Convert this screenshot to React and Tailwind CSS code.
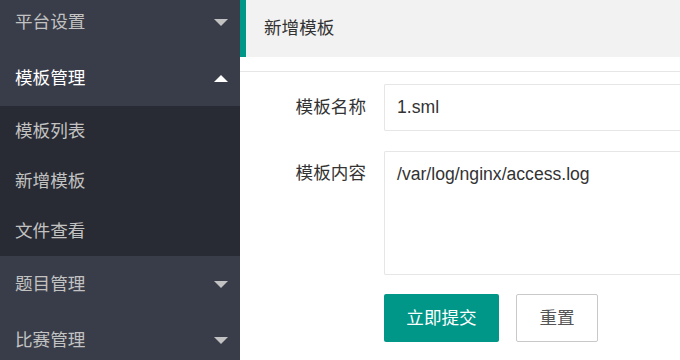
import React from 'react';

const font = { fontFamily: '"Liberation Sans", "Noto Sans CJK SC", sans-serif' };

const Caret = ({ up, light }) => (
    <span
        className={`w-0 h-0 border-l-[7px] border-r-[7px] border-l-transparent border-r-transparent ${
            up ? 'border-b-[7px] border-b-white' : 'border-t-[7px] border-t-[#c2c2c2]'
        } ${light ? '' : ''}`}
    ></span>
);

const NavItem = ({ label, open, active }) => (
    <div className="h-[56px] flex items-center justify-between pl-[15px] pr-[12px]">
        <span className={`text-[17.6px] ${active ? 'text-white' : 'text-[#c2c2c2]'}`}>{label}</span>
        <Caret up={open} />
    </div>
);

const SubItem = ({ label }) => (
    <div className="h-[50px] flex items-center pl-[15px] text-[17.6px] text-[#c2c2c2]">{label}</div>
);

const App = () => {
    return (
        <div className="w-[680px] h-[360px] flex overflow-hidden bg-white" style={font}>
            {/* Sidebar */}
            <div className="w-[240px] h-full bg-[#393D49] overflow-hidden shrink-0">
                <div className="-mt-[6px]">
                    <NavItem label="平台设置" />
                    <NavItem label="模板管理" open active />
                    <div className="bg-[#282b33]">
                        <SubItem label="模板列表" />
                        <SubItem label="新增模板" />
                        <SubItem label="文件查看" />
                    </div>
                    <NavItem label="题目管理" />
                    <NavItem label="比赛管理" />
                </div>
            </div>

            {/* Content */}
            <div className="flex-1 flex flex-col">
                <div className="h-[57px] border-l-[6px] border-[#009688] bg-[#f2f2f2] flex items-center pl-[18px] text-[17.6px] text-[#333]">
                    新增模板
                </div>
                <div className="mt-[14px] border-t border-[#e6e6e6] pt-[12px] flex flex-col gap-[20px]">
                    <div className="flex items-center">
                        <label className="w-[126px] text-right text-[17.6px] text-[#333]">模板名称</label>
                        <div className="ml-[18px] flex-1 h-[47px] border border-[#e6e6e6] rounded-l-[2px] border-r-0 flex items-center pl-[12px] text-[17.6px] text-[#333]">
                            1.sml
                        </div>
                    </div>
                    <div className="flex items-start">
                        <label className="w-[126px] text-right text-[17.6px] text-[#333] pt-[9px]">模板内容</label>
                        <div className="ml-[18px] flex-1 h-[124px] border border-[#e6e6e6] rounded-l-[2px] border-r-0 pl-[12px] pt-[9px] text-[17.6px] text-[#333]">
                            /var/log/nginx/access.log
                        </div>
                    </div>
                    <div className="flex pl-[144px] gap-[17px] -mt-[1px]">
                        <button className="w-[115px] h-[48px] bg-[#009688] rounded-[2px] text-white text-[17.6px]">立即提交</button>
                        <button className="w-[82px] h-[48px] bg-white border border-[#c9c9c9] rounded-[2px] text-[#555] text-[17.6px]">重置</button>
                    </div>
                </div>
            </div>
        </div>
    );
};

export default App;
